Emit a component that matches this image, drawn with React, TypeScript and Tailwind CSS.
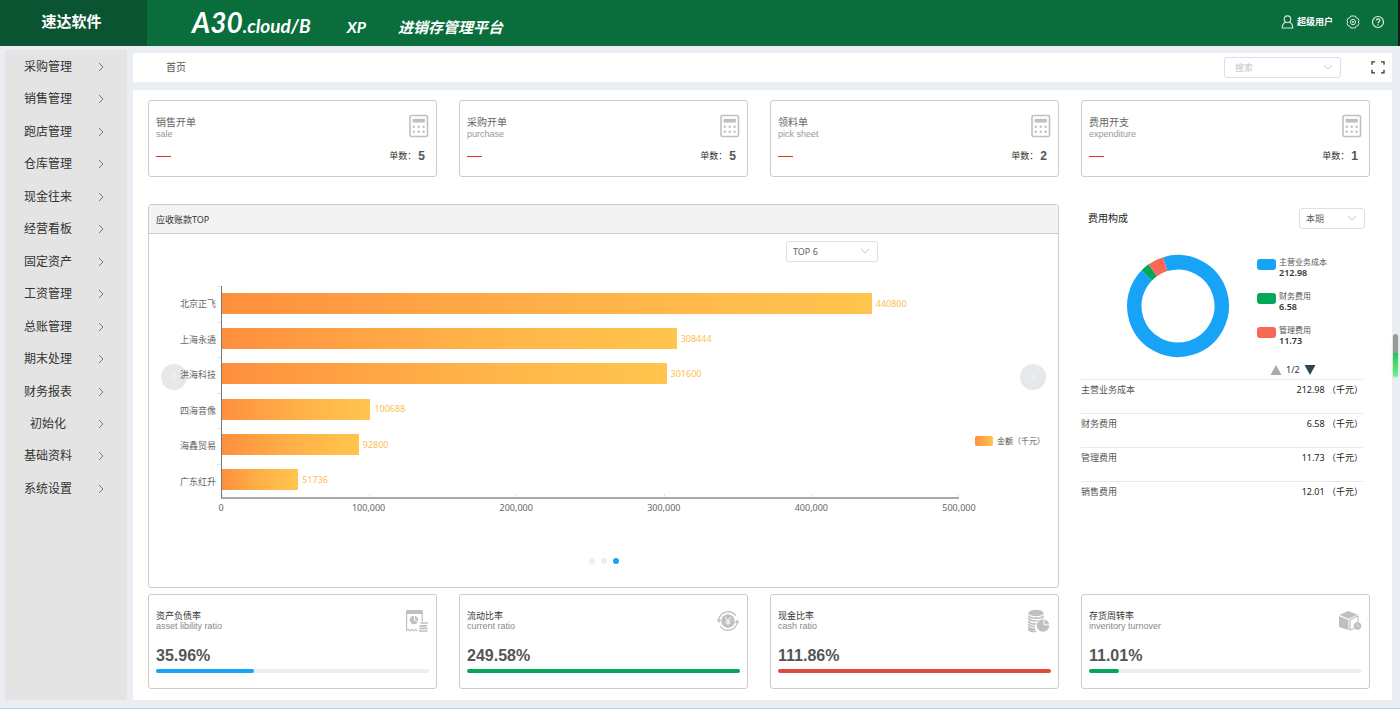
import { useState, type ReactNode } from 'react';

const menuItems = [
  '采购管理',
  '销售管理',
  '跑店管理',
  '仓库管理',
  '现金往来',
  '经营看板',
  '固定资产',
  '工资管理',
  '总账管理',
  '期末处理',
  '财务报表',
  '初始化',
  '基础资料',
  '系统设置',
];

const orderCards = [
  { title: '销售开单', sub: 'sale', count: 5 },
  { title: '采购开单', sub: 'purchase', count: 5 },
  { title: '领料单', sub: 'pick sheet', count: 2 },
  { title: '费用开支', sub: 'expenditure', count: 1 },
];

const receivables = [
  { name: '北京正飞', value: 440800 },
  { name: '上海永通', value: 308444 },
  { name: '洪海科技', value: 301600 },
  { name: '四海音像', value: 100688 },
  { name: '海鑫贸易', value: 92800 },
  { name: '广东红升', value: 51736 },
];

const axisMax = 500000;
const axisLabels = ['0', '100,000', '200,000', '300,000', '400,000', '500,000'];

const expenses = [
  { name: '主营业务成本', value: 212.98, color: '#18a4f6' },
  { name: '财务费用', value: 6.58, color: '#04a65a' },
  { name: '管理费用', value: 11.73, color: '#f96854' },
  { name: '销售费用', value: 12.01, color: '#f8b551' },
];

function Chevron({ className = '', dir }: { className?: string; dir: 'down' | 'right' | 'left' }) {
  const d = {
    down: 'M1 3l4 4 4-4',
    right: 'M3 1l4 4-4 4',
    left: 'M7 1L3 5l4 4',
  }[dir];
  return (
    <svg viewBox="0 0 10 10" fill="none" stroke="currentColor" className={className} aria-hidden="true">
      <path d={d} />
    </svg>
  );
}

function CalculatorIcon() {
  return (
    <svg width="20" height="24" viewBox="0 0 20 24" fill="none" aria-hidden="true">
      <rect x="1" y="1.5" width="17.5" height="21" rx="1.5" stroke="#c0c0c0" strokeWidth="1.6" />
      <rect x="3.6" y="4.8" width="12.2" height="3.8" fill="#c0c0c0" />
      {[12.7, 17.7].map((y) =>
        [4.8, 9.7, 14.6].map((x) => <circle key={`${x}-${y}`} cx={x} cy={y} r="1.2" fill="#c0c0c0" />)
      )}
    </svg>
  );
}

function ReportIcon() {
  return (
    <svg width="24" height="24" viewBox="0 0 24 24" fill="none" aria-hidden="true">
      <path d="M1 5V2.2C1 1.4 1.500 1 2.200 1h14.400c.7 0 1.200.4 1.200 1.200V5z" fill="#c0c0c0" />
      <path
        d="M1.600 4v17.500l1.700-1 1.700 1.200 1.800-1.200 1.800 1.200 1.800-1.200 1.800 1.200M17.200 4v8.500"
        stroke="#c0c0c0"
        strokeWidth="1.200"
      />
      <circle cx="9" cy="11" r="4.200" fill="#c0c0c0" />
      <path d="M9.400 6.400V11l3.400 1.600" stroke="#fff" strokeWidth="1" />
      <path d="M15.500 14H23M14.500 16.800h7.500M14.500 19.400h8M14 22h8.500" stroke="#c0c0c0" strokeWidth="1.700" />
    </svg>
  );
}

function YenCycleIcon() {
  return (
    <svg width="24" height="24" viewBox="0 0 24 24" fill="none" aria-hidden="true">
      <circle cx="12" cy="12" r="6.800" fill="#c0c0c0" />
      <path d="M9.200 8l2.800 3.600L14.800 8M12 11.600V16M9.400 12h5.200M9.400 14h5.200" stroke="#fff" strokeWidth="1" />
      <path d="M2.700 11A9.500 9.500 0 0 1 20 7M21.300 13A9.500 9.500 0 0 1 4 17" stroke="#c0c0c0" strokeWidth="1.300" />
      <path d="M.6 10.500h4.600L3 14zM18.800 14h4.600L21.200 10.500z" fill="#c0c0c0" />
    </svg>
  );
}

function CoinsIcon() {
  return (
    <svg width="24" height="24" viewBox="0 0 24 24" fill="none" aria-hidden="true">
      <ellipse cx="9" cy="4" rx="7.600" ry="3.300" fill="#c0c0c0" />
      <path
        d="M1.400 6.500c1 3.600 14.200 3.600 15.200 0M1.400 9.300c1 3.600 14.200 3.600 15.200 0M1.400 12.100c1 2.600 4.600 3 7.600 2.800M1.400 14.900c.6 2 3.600 2.700 6.600 2.700M1.400 17.700c.6 2 3.600 2.600 6.800 2.600M1.400 20c1 2 4 2.600 7.800 2.400"
        stroke="#c0c0c0"
        strokeWidth="1.700"
      />
      <circle cx="16" cy="16.500" r="7" fill="#fff" />
      <circle cx="16" cy="16.500" r="6.200" fill="#c0c0c0" />
      <path d="M17 10v5.800h6" stroke="#fff" strokeWidth="1" />
    </svg>
  );
}

function BoxIcon() {
  return (
    <svg width="24" height="24" viewBox="0 0 24 24" fill="none" aria-hidden="true">
      <path d="M1.500 6L10 2l9.500 3.500L11 10z" fill="#c0c0c0" />
      <path d="M1 7l9.500 4v10L1 18z" fill="#c0c0c0" />
      <path d="M12 11l8-4.200V14M12 11v10l4-1.500" stroke="#c0c0c0" strokeWidth="1.200" />
      <circle cx="19.500" cy="17" r="3.800" fill="#c0c0c0" />
      <path d="M19.500 15v2.300h1.800" stroke="#e6e6e6" strokeWidth=".8" />
    </svg>
  );
}

const ratioCards: { title: string; sub: string; value: number; bar: string; icon: ReactNode }[] = [
  { title: '资产负债率', sub: 'asset libility ratio', value: 35.96, bar: 'bg-[#18a4f6]', icon: <ReportIcon /> },
  { title: '流动比率', sub: 'current ratio', value: 249.58, bar: 'bg-[#04a65a]', icon: <YenCycleIcon /> },
  { title: '现金比率', sub: 'cash ratio', value: 111.86, bar: 'bg-[#dd4b39]', icon: <CoinsIcon /> },
  { title: '存货周转率', sub: 'inventory turnover', value: 11.01, bar: 'bg-[#04a65a]', icon: <BoxIcon /> },
];

function Header() {
  return (
    <header className="flex h-[46px] border-r-2 border-[#1a1a1a] bg-[#096e3c] text-white">
      <div className="flex w-[147px] justify-center bg-[#0a5432] pr-1 text-[15px] leading-[42px] font-bold">
        速达软件
      </div>
      <div className="flex flex-1 items-baseline pl-[45px] font-['Lato','Noto_Sans_CJK_SC',sans-serif] leading-[44px] font-bold italic">
        <span className="text-[28px]">A30</span>
        <span className="text-[19px]">.cloud/B</span>
        <span className="ml-9 text-[16px]">XP</span>
        <span className="ml-8 text-[15px]">进销存管理平台</span>
      </div>
      <div className="flex h-11 items-center pr-[13px]">
        <svg width="13" height="14" viewBox="0 0 13 14" fill="none" stroke="#d5e6dc" strokeWidth="1.1" aria-hidden="true">
          <circle cx="6.500" cy="4.200" r="3.300" />
          <path d="M4.600 7.200C2.500 8 1.200 10 1.200 13h10.600c0-3-1.300-5-3.400-5.800" />
        </svg>
        <span className="ml-[3px] text-[9px] font-bold">超级用户</span>
        <button type="button" aria-label="设置" className="ml-[13px]">
          <svg width="14" height="14" viewBox="0 0 14 14" fill="none" stroke="#d5e6dc" strokeLinejoin="round">
            <path d="M4.800 1h4.400l1 1.900 1.900.5L13 5.600 12.200 7l.8 1.400-.9 2.200-1.900.5-1 1.900H4.800l-1-1.900-1.900-.5L1 8.400 1.800 7 1 5.600l.9-2.200 1.900-.5z" />
            <path d="M5.600 4.500h2.800L9.800 7 8.400 9.500H5.600L4.200 7z" />
            <circle cx="7" cy="7" r=".8" />
          </svg>
        </button>
        <button type="button" aria-label="帮助" className="ml-[11px]">
          <svg width="14" height="14" viewBox="0 0 14 14" fill="none" stroke="#e3efe8" strokeWidth="1.2">
            <circle cx="7" cy="7" r="5.500" />
            <path d="M5.200 5.600C5.200 3.300 8.800 3.400 8.800 5.500 8.800 6.900 7 6.800 7 8.300M7 9.300v1.200" />
          </svg>
        </button>
      </div>
    </header>
  );
}

function Sidebar() {
  return (
    <nav className="w-[122px] shrink-0 bg-[#e4e4e4] pt-px">
      <ul className="flex h-[454px] flex-col justify-between">
        {menuItems.map((item) => (
          <li key={item}>
            <a href="#" className="flex h-8 items-center pl-[19px] text-[12px] text-[#333]">
              <span className="w-12 text-center">{item}</span>
              <Chevron dir="right" className="ml-6 size-[10px] text-[#777]" />
            </a>
          </li>
        ))}
      </ul>
    </nav>
  );
}

function TopBar() {
  return (
    <div className="flex h-[29px] items-center bg-white pr-[7px] pl-[33px]">
      <a href="#" className="text-[10px] text-[#555]">
        首页
      </a>
      <label className="relative ml-auto flex text-[9px]">
        <input
          type="text"
          aria-label="搜索"
          placeholder="搜索"
          className="h-[21px] w-[117px] rounded-[3px] border border-[#dcdfe6] pl-[10px] placeholder:text-[#c0c4cc]"
        />
        <Chevron dir="down" className="absolute top-[5px] right-2 size-[10px] text-[#c0c4cc]" />
      </label>
      <button type="button" aria-label="全屏" className="ml-[30px]">
        <svg width="14" height="14" viewBox="0 0 14 14" fill="none" stroke="#333" strokeWidth="1.300">
          <path d="M1 3.800V.8h3M10 .8h3v3M13 8.800v3h-3M4 11.800H1v-3" />
        </svg>
      </button>
    </div>
  );
}

function OrderCard({ title, sub, count }: { title: string; sub: string; count: number }) {
  return (
    <section className="flex h-[77px] flex-col justify-between rounded-[3px] border border-[#ccc] px-[7px] pt-[13px] pb-[12px]">
      <div className="flex justify-between">
        <div className="pt-px">
          <h2 className="text-[10px] leading-[14px] text-[#666]">{title}</h2>
          <p className="font-['Liberation_Sans',sans-serif] text-[9px] leading-[10px] text-[#999]">{sub}</p>
        </div>
        <CalculatorIcon />
      </div>
      <div className="flex items-center justify-between pr-1">
        <span className="h-px w-[15px] bg-[#e0301e]" />
        <p className="flex items-center text-[9px] leading-4 text-[#333]">
          单数：
          <b className="ml-0.5 font-['Liberation_Sans',sans-serif] text-[12px] text-[#555]">{count}</b>
        </p>
      </div>
    </section>
  );
}

function RatioCard({ title, sub, value, bar, icon }: (typeof ratioCards)[number]) {
  return (
    <section className="h-[95px] rounded-[3px] border border-[#ccc] px-[7px] pt-[14px]">
      <div className="flex h-6 justify-between">
        <div className="pt-0.5">
          <h2 className="text-[9px] leading-[10px] text-[#333]">{title}</h2>
          <p className="font-['Liberation_Sans',sans-serif] text-[9px] leading-[11px] text-[#888]">{sub}</p>
        </div>
        {icon}
      </div>
      <p className="mt-[13px] font-['Liberation_Sans',sans-serif] text-[16px] leading-5 font-bold text-[#555]">
        {value.toFixed(2)}%
      </p>
      <div className="mt-[3px] h-1 rounded-full bg-[#ebeef5]">
        <div className={`h-1 rounded-full ${bar}`} style={{ width: `${Math.min(value, 100)}%` }} />
      </div>
    </section>
  );
}

function BarChart() {
  return (
    <div className="mt-6 flex">
      <div className="w-[68px] shrink-0">
        <ul className="flex h-[213px] flex-col pr-px text-right text-[9px] text-[#666]">
          {receivables.map((r) => (
            <li key={r.name} className="flex flex-1 items-center justify-end">
              {r.name}
            </li>
          ))}
        </ul>
      </div>
      <div className="flex h-[213px] w-1 flex-col">
        {receivables.map((r) => (
          <span key={r.name} className="flex-1 border-t border-[#e5e5e5]" />
        ))}
      </div>
      <div className="flex-1">
        <div className="relative flex h-[213px] flex-col border-b-2 border-l border-b-[#aaa] border-l-[#777]">
          {receivables.map((r) => (
            <div key={r.name} className="flex flex-1 items-center">
              <div
                className="h-[21px] bg-linear-to-r from-[#ff8f3e] via-[#ffb048] to-[#ffc54e]"
                style={{ width: `${(r.value / axisMax) * 100}%` }}
              />
              <span className="ml-1 text-[9px] text-[#fdc04d]">{r.value}</span>
            </div>
          ))}
          <div className="absolute inset-x-0 bottom-0 flex justify-between">
            {axisLabels.map((label) => (
              <span key={label} className="h-[3px] w-px bg-[#e5e5e5]" />
            ))}
          </div>
        </div>
        <div className="flex justify-between text-[9px] leading-[18px] text-[#666]">
          {axisLabels.map((label) => (
            <span key={label} className="flex w-0 justify-center">
              {label}
            </span>
          ))}
        </div>
      </div>
      <div className="w-[99px] shrink-0 pt-[149px] pl-4">
        <p className="flex items-center text-[8px] leading-3 whitespace-nowrap text-[#555]">
          <span className="mr-1 h-[10px] w-[18px] rounded-[2px] bg-linear-to-r from-[#ff8f3e] to-[#ffc54e]" />
          金额（千元）
        </p>
      </div>
    </div>
  );
}

function ReceivablePanel() {
  const [slide, setSlide] = useState(2);

  return (
    <section className="col-span-3 flex h-[384px] flex-col rounded-[3px] border border-[#ccc]">
      <h2 className="h-[29px] border-b border-[#ccc] bg-[#f3f3f3] pl-[7px] text-[9px] leading-[29px] text-[#333]">
        应收账款TOP
      </h2>
      <div className="relative flex-1 pt-[7px]">
        <div className="flex justify-end pr-[180px]">
          <label className="relative flex">
            <select
              aria-label="TOP"
              className="h-[21px] w-[92px] appearance-none rounded-[3px] border border-[#dcdfe6] pl-[6px] text-[9px] text-[#606266]"
            >
              <option>TOP 6</option>
              <option>TOP 10</option>
            </select>
            <Chevron dir="down" className="absolute top-[5px] right-2 size-[10px] text-[#c0c4cc]" />
          </label>
        </div>
        <BarChart />
        <button
          type="button"
          aria-label="上一页"
          onClick={() => setSlide((slide + 2) % 3)}
          className="absolute top-[130px] left-3 flex size-[26px] items-center justify-center rounded-full bg-[#1f2d3d]/11 text-white"
        >
          <Chevron dir="left" className="size-2" />
        </button>
        <button
          type="button"
          aria-label="下一页"
          onClick={() => setSlide((slide + 1) % 3)}
          className="absolute top-[130px] right-3 flex size-[26px] items-center justify-center rounded-full bg-[#1f2d3d]/11 text-white"
        >
          <Chevron dir="right" className="size-2" />
        </button>
        <div className="mt-[41px] flex justify-center gap-[6px]">
          {[0, 1, 2].map((i) => (
            <button
              key={i}
              type="button"
              aria-label={`第${i + 1}页`}
              onClick={() => setSlide(i)}
              className={i === slide ? 'size-[6px] rounded-full bg-[#18a4f6]' : 'size-[6px] rounded-full bg-[#ededed]'}
            />
          ))}
        </div>
      </div>
    </section>
  );
}

function Donut() {
  const slices = expenses.slice(0, 3);
  const total = slices.reduce((sum, s) => sum + s.value, 0);
  let start = 0;

  return (
    <svg width="104" height="104" viewBox="0 0 104 104" fill="none" strokeWidth="14.5" role="img" aria-label="费用构成">
      <g transform="rotate(-107 52 52)">
        {slices.map((s) => {
          const offset = start;
          const length = (s.value / total) * 100;
          start += length;
          return (
            <circle
              key={s.name}
              cx="52"
              cy="52"
              r="43.750"
              pathLength="100"
              stroke={s.color}
              strokeDasharray={`${length} ${100 - length}`}
              strokeDashoffset={-offset}
            />
          );
        })}
      </g>
    </svg>
  );
}

function ExpensePanel() {
  return (
    <section className="pt-1 pr-[5px]">
      <div className="flex items-center justify-between pl-[7px]">
        <h2 className="text-[10px] text-[#222]">费用构成</h2>
        <label className="relative flex">
          <select
            aria-label="期间"
            className="h-[21px] w-[66px] appearance-none rounded-[3px] border border-[#dcdfe6] pl-[6px] text-[9px] text-[#606266]"
          >
            <option>本期</option>
            <option>上期</option>
          </select>
          <Chevron dir="down" className="absolute top-[5px] right-2 size-[10px] text-[#c0c4cc]" />
        </label>
      </div>
      <div className="flex h-[150px] justify-end pt-[25px]">
        <Donut />
        <div className="ml-[27px] w-[108px]">
          <ul className="flex flex-col gap-3 pt-[2px]">
            {expenses.slice(0, 3).map((e) => (
              <li key={e.name} className="flex items-start text-[8px] leading-[11px] text-[#555]">
                <span
                  className="mt-[3px] mr-[3px] h-[11px] w-[19px] rounded-[3px]"
                  style={{ backgroundColor: e.color }}
                />
                <div>
                  {e.name}
                  <b className="block text-[9px] font-semibold text-[#333]">{e.value}</b>
                </div>
              </li>
            ))}
          </ul>
          <div className="mt-4 flex items-center gap-1 pl-[13px] text-[9px] leading-4 text-[#333]">
            <button type="button" aria-label="上一组">
              <svg width="12" height="10" viewBox="0 0 12 10" fill="#aaa">
                <path d="M6 0l5.500 10H.5z" />
              </svg>
            </button>
            1/2
            <button type="button" aria-label="下一组">
              <svg width="12" height="10" viewBox="0 0 12 10" fill="#2f4554">
                <path d="M.5 0h11L6 10z" />
              </svg>
            </button>
          </div>
        </div>
      </div>
      <div className="pr-0.5">
        <table className="w-full text-[9px]">
          <tbody>
            {expenses.map((e) => (
              <tr key={e.name} className="h-[34px] border-t border-[#e9e9e9] align-top leading-5">
                <td className="p-0 text-[#555]">{e.name}</td>
                <td className="p-0 text-right text-[#222]">{e.value} （千元）</td>
              </tr>
            ))}
          </tbody>
        </table>
      </div>
    </section>
  );
}

export default function App() {
  return (
    <div className="flex min-h-screen flex-col border-b border-[#b5d4ea] bg-[#eaeef3] font-['Noto_Sans','Noto_Sans_CJK_SC',sans-serif]">
      <Header />
      <div className="flex flex-1 pt-1 pr-2 pb-2 pl-[5px]">
        <Sidebar />
        <div className="ml-[6px] flex flex-1 flex-col gap-2 pt-[3px]">
          <TopBar />
          <main className="flex-1 bg-white pt-[10px] pr-[22px] pb-[11px] pl-[15px]">
            <div className="grid grid-cols-4 gap-x-[22px]">
              {orderCards.map((card) => (
                <OrderCard key={card.title} {...card} />
              ))}
            </div>
            <div className="mt-[27px] grid grid-cols-4 gap-x-[22px]">
              <ReceivablePanel />
              <ExpensePanel />
            </div>
            <div className="mt-[6px] grid grid-cols-4 gap-x-[22px]">
              {ratioCards.map((card) => (
                <RatioCard key={card.title} {...card} />
              ))}
            </div>
          </main>
        </div>
      </div>
      {/* usage indicator on the window edge */}
      <div className="fixed top-[334px] right-[2px] flex h-[43px] w-[5px] flex-col overflow-hidden rounded-full shadow-sm">
        <span className="h-[19px] bg-[#999]" />
        <span className="flex-1 bg-linear-to-b from-[#1fc45c] to-[#6df285]" />
      </div>
    </div>
  );
}
